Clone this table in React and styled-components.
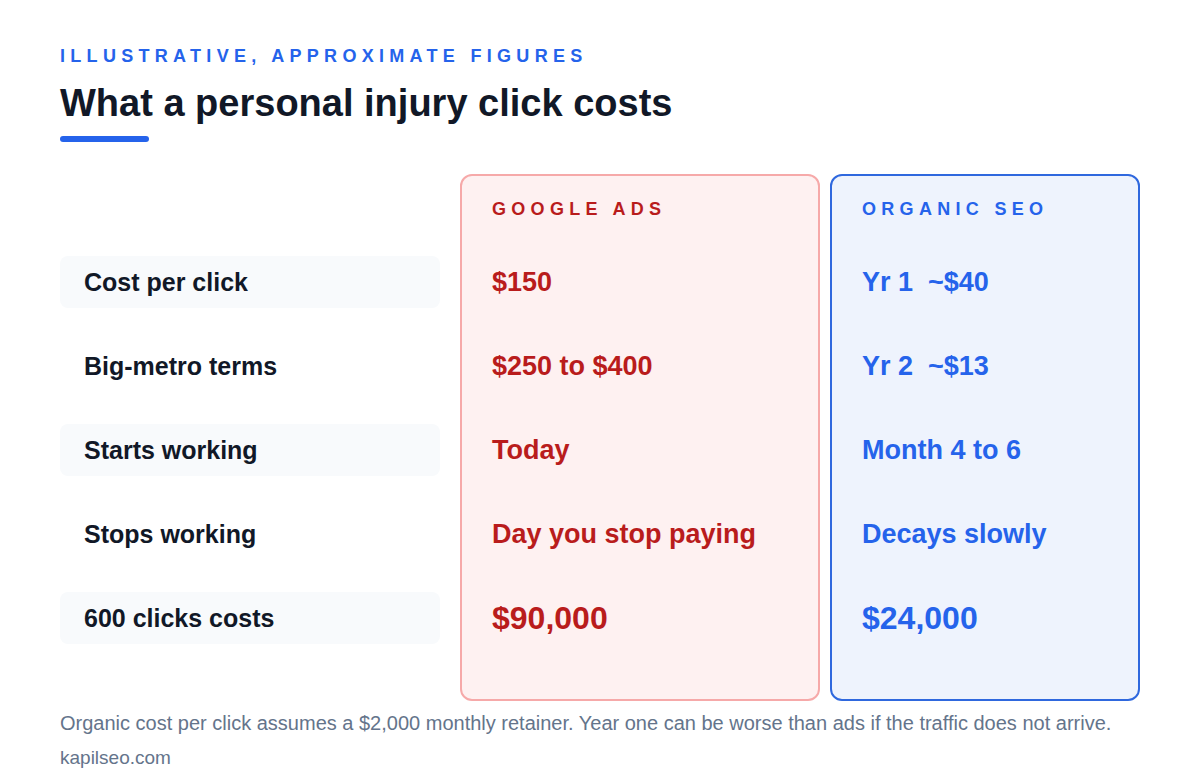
import React from 'react';
import styled, { createGlobalStyle } from 'styled-components';

const GlobalStyle = createGlobalStyle`
  * {
    box-sizing: border-box;
  }

  body {
    margin: 0;
    background: #ffffff;
    font-family: 'Liberation Sans', Arial, sans-serif;
    color: #111827;
  }
`;

const tones = {
  red: { border: '#f6a9a9', bg: '#fef1f1', text: '#b91c1c' },
  blue: { border: '#2f68de', bg: '#eef3fd', text: '#2563eb' },
};

const Page = styled.div`
  width: 1200px;
  height: 780px;
  padding: 44px 60px 0;
`;

const Eyebrow = styled.p`
  margin: 0;
  font-size: 18px;
  line-height: 24px;
  font-weight: 700;
  letter-spacing: 5.3px;
  color: #2563eb;
`;

const Title = styled.h1`
  margin: 13px 0 0;
  font-size: 38px;
  line-height: 44px;
  font-weight: 700;
  color: #111827;
`;

const Bar = styled.div`
  width: 89px;
  height: 6px;
  margin-top: 11px;
  border-radius: 3px;
  background: #2563eb;
`;

const Comparison = styled.div`
  display: flex;
  gap: 10px;
  margin-top: 32px;
`;

const Column = styled.div`
  display: flex;
  flex-direction: column;
  gap: 32px;
  width: ${(p) => p.$width}px;
  padding: 0 0 55px;
  border: 2px solid ${(p) => (p.$tone ? tones[p.$tone].border : 'transparent')};
  border-radius: 12px;
  background: ${(p) => (p.$tone ? tones[p.$tone].bg : 'transparent')};
`;

const LabelColumn = styled(Column)`
  margin-right: 10px;
  border: none;
  padding-top: 2px;
`;

const Header = styled.div`
  height: 48px;
  padding: 22px 0 0 30px;
  font-size: 18px;
  line-height: 22px;
  font-weight: 700;
  letter-spacing: 5.3px;
  color: ${(p) => tones[p.$tone].text};
`;

const Spacer = styled.div`
  height: 48px;
`;

const Label = styled.div`
  display: flex;
  align-items: center;
  height: 52px;
  padding-left: 24px;
  border-radius: 8px;
  background: ${(p) => (p.$shaded ? '#f8fafc' : 'transparent')};
  font-size: 25px;
  font-weight: 700;
  color: #111827;
`;

const Value = styled.div`
  display: flex;
  align-items: center;
  height: 52px;
  padding-left: 30px;
  font-size: ${(p) => (p.$big ? 32 : 27)}px;
  font-weight: 700;
  white-space: pre;
  color: ${(p) => tones[p.$tone].text};
`;

const Note = styled.p`
  margin: 9px 0 0;
  font-size: 20px;
  line-height: 26px;
  color: #64748b;
`;

const Source = styled.p`
  margin: 9px 0 0;
  font-size: 19px;
  line-height: 26px;
  color: #64748b;
`;

const rows = [
  { label: 'Cost per click', ads: '$150', seo: 'Yr 1  ~$40' },
  { label: 'Big-metro terms', ads: '$250 to $400', seo: 'Yr 2  ~$13' },
  { label: 'Starts working', ads: 'Today', seo: 'Month 4 to 6' },
  { label: 'Stops working', ads: 'Day you stop paying', seo: 'Decays slowly' },
  { label: '600 clicks costs', ads: '$90,000', seo: '$24,000', big: true },
];

const App = () => {
  return (
    <Page>
      <GlobalStyle />
      <Eyebrow>ILLUSTRATIVE, APPROXIMATE FIGURES</Eyebrow>
      <Title>What a personal injury click costs</Title>
      <Bar />

      <Comparison>
        <LabelColumn $width={380}>
          <Spacer />
          {rows.map((r, i) => (
            <Label key={r.label} $shaded={i % 2 === 0}>
              {r.label}
            </Label>
          ))}
        </LabelColumn>

        <Column $width={360} $tone="red">
          <Header $tone="red">GOOGLE ADS</Header>
          {rows.map((r) => (
            <Value key={r.label} $tone="red" $big={r.big}>
              {r.ads}
            </Value>
          ))}
        </Column>

        <Column $width={310} $tone="blue">
          <Header $tone="blue">ORGANIC SEO</Header>
          {rows.map((r) => (
            <Value key={r.label} $tone="blue" $big={r.big}>
              {r.seo}
            </Value>
          ))}
        </Column>
      </Comparison>

      <Note>
        Organic cost per click assumes a $2,000 monthly retainer. Year one can be worse than ads if the traffic does not arrive.
      </Note>
      <Source>kapilseo.com</Source>
    </Page>
  );
};

export default App;
